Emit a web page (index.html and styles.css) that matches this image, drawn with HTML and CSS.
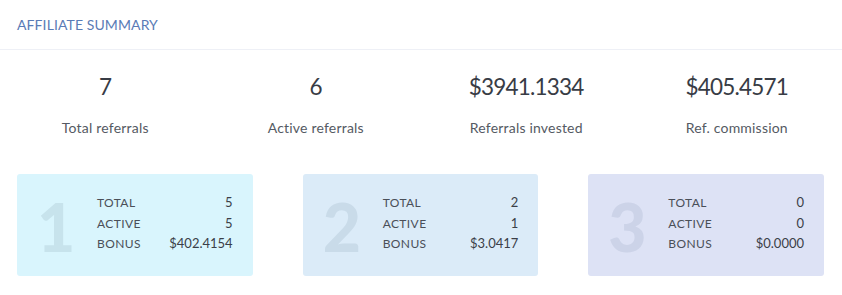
FILE: index.html
```html
<!DOCTYPE html>
<html>
<head>
<meta charset="utf-8">
<link rel="stylesheet" href="styles.css">
</head>
<body>
<div class="panel">
  <div class="panel-head">AFFILIATE SUMMARY</div>
  <div class="stats">
    <div class="stat"><div class="stat-value">7</div><div class="stat-label">Total referrals</div></div>
    <div class="stat"><div class="stat-value">6</div><div class="stat-label">Active referrals</div></div>
    <div class="stat"><div class="stat-value">$3941.1334</div><div class="stat-label">Referrals invested</div></div>
    <div class="stat"><div class="stat-value">$405.4571</div><div class="stat-label">Ref. commission</div></div>
  </div>
  <div class="levels">
    <div class="level level-1">
      <div class="level-num">1</div>
      <div class="level-table">
        <span class="k">TOTAL</span><span class="v">5</span>
        <span class="k">ACTIVE</span><span class="v">5</span>
        <span class="k">BONUS</span><span class="v">$402.4154</span>
      </div>
    </div>
    <div class="level level-2">
      <div class="level-num">2</div>
      <div class="level-table">
        <span class="k">TOTAL</span><span class="v">2</span>
        <span class="k">ACTIVE</span><span class="v">1</span>
        <span class="k">BONUS</span><span class="v">$3.0417</span>
      </div>
    </div>
    <div class="level level-3">
      <div class="level-num">3</div>
      <div class="level-table">
        <span class="k">TOTAL</span><span class="v">0</span>
        <span class="k">ACTIVE</span><span class="v">0</span>
        <span class="k">BONUS</span><span class="v">$0.0000</span>
      </div>
    </div>
  </div>
</div>
</body>
</html>
```
FILE: styles.css
```css
html, body {
  margin: 0;
  padding: 0;
  background: #ffffff;
}
body {
  font-family: Lato, "Open Sans", sans-serif;
  color: #3b3f48;
}
.panel {
  width: 842px;
  height: 295px;
  background: #fff;
}
.panel-head {
  height: 50px;
  box-sizing: border-box;
  padding: 16px 17px 0;
  font-size: 14px;
  line-height: 17px;
  color: #5a7bb6;
  letter-spacing: 0.1px;
  border-bottom: 1px solid #eef0f6;
}
.stats {
  display: grid;
  grid-template-columns: repeat(4, 1fr);
  padding-top: 22px;
}
.stat {
  text-align: center;
}
.stat-value {
  font-size: 22.5px;
  font-weight: 400;
  line-height: 30px;
  letter-spacing: -0.8px;
  color: #383c45;
}
.stat-label {
  margin-top: 17px;
  font-size: 14px;
  line-height: 18px;
  color: #555a63;
  letter-spacing: 0.2px;
}
.levels {
  display: grid;
  grid-template-columns: repeat(3, 1fr);
  column-gap: 50px;
  padding: 0 18px 0 17px;
  margin-top: 37px;
}
.level {
  height: 102px;
  border-radius: 3px;
  display: flex;
  align-items: center;
  padding: 0 20px 0 20px;
}
.level-1 { background: #d9f5fd; }
.level-2 { background: #dbebf8; }
.level-3 { background: #dde2f5; }
.level-num {
  width: 60px;
  font-size: 66px;
  font-weight: 900;
  line-height: 1;
  color: #c7e3ec;
  margin-top: 4px;
}
.level-2 .level-num { color: #c9dbe9; }
.level-3 .level-num { color: #ccd3e8; }
.level-table {
  flex: 1;
  display: grid;
  grid-template-columns: auto auto;
  row-gap: 3px;
  margin-top: -3px;
}
.k {
  font-size: 12px;
  line-height: 17.5px;
  color: #4a4f58;
  letter-spacing: 0.4px;
}
.v {
  font-size: 13px;
  line-height: 17.5px;
  text-align: right;
  color: #3b3f48;
}
```
